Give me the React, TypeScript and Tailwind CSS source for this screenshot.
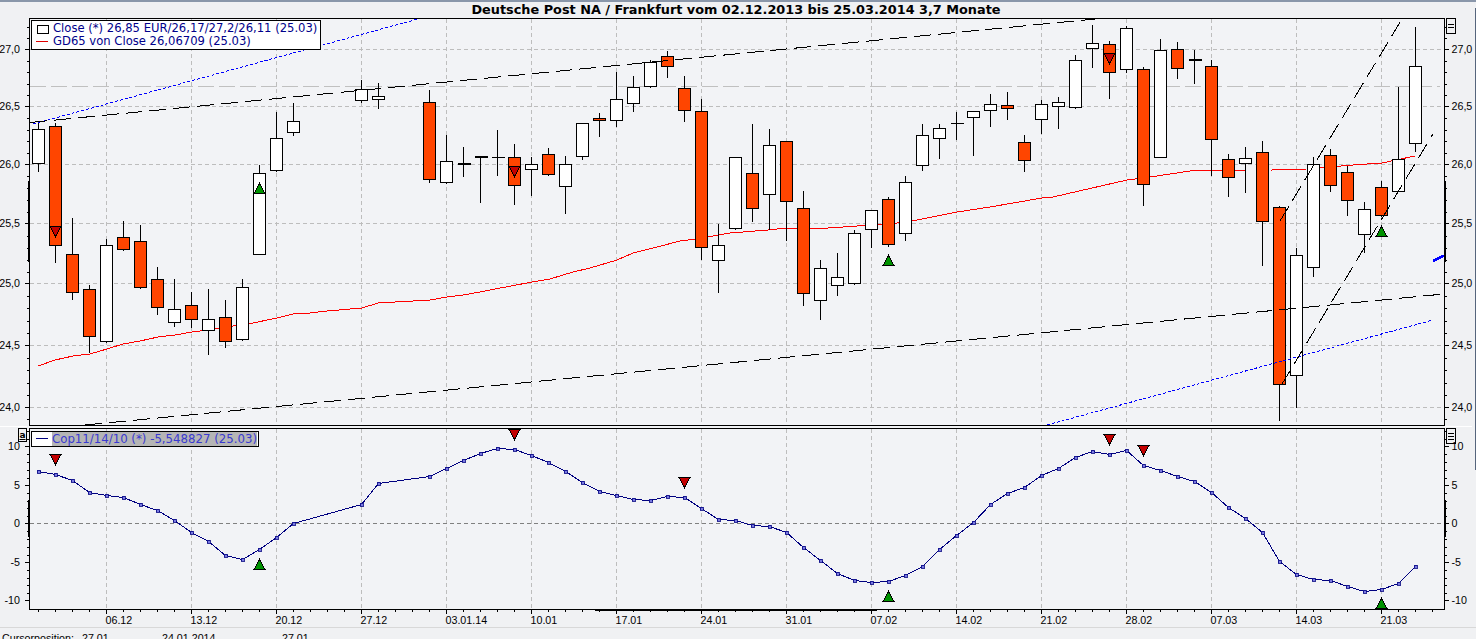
type Candle = [number, number, number, number, number, string];

// [index, wick top, body top, body bottom, wick bottom, kind]
// kind: o orange, w white, d thick doji, t thin doji
const candles: Candle[] = [
  [0, 123, 129, 163, 172, 'w'], [1, 123, 126, 245, 263, 'o'], [2, 218, 254, 292, 300, 'o'],
  [3, 285, 289, 336, 353, 'o'], [4, 239, 245, 341, 343, 'w'], [5, 221, 237, 249, 251, 'o'],
  [6, 225, 241, 287, 289, 'o'], [7, 267, 279, 307, 315, 'o'], [8, 279, 309, 322, 327, 'w'],
  [9, 292, 305, 319, 328, 'o'], [10, 289, 319, 330, 355, 'w'], [11, 300, 317, 341, 348, 'o'],
  [12, 279, 287, 339, 341, 'w'], [13, 165, 173, 254, 255, 'w'], [14, 112, 138, 170, 172, 'w'],
  [15, 103, 121, 132, 136, 'w'], [19, 80, 89, 100, 103, 'w'], [20, 83, 96, 99, 109, 'w'],
  [23, 90, 102, 179, 183, 'o'], [24, 135, 161, 182, 184, 'w'], [25, 147, 163, 163, 177, 'd'],
  [26, 157, 156, 156, 203, 'd'], [27, 130, 157, 157, 176, 't'], [28, 144, 157, 185, 205, 'o'],
  [29, 157, 164, 169, 196, 'w'], [30, 148, 154, 174, 176, 'o'], [31, 156, 164, 186, 214, 'w'],
  [32, 123, 123, 156, 160, 'w'], [33, 113, 118, 120, 137, 'o'], [34, 72, 99, 120, 127, 'w'],
  [35, 76, 87, 103, 112, 'w'], [36, 60, 62, 86, 88, 'w'], [37, 51, 56, 66, 78, 'o'],
  [38, 76, 88, 110, 122, 'o'], [39, 99, 111, 247, 260, 'o'], [40, 224, 245, 260, 293, 'w'],
  [41, 157, 157, 228, 230, 'w'], [42, 124, 173, 208, 222, 'o'], [43, 129, 145, 194, 230, 'w'],
  [44, 141, 141, 201, 241, 'o'], [45, 191, 208, 293, 306, 'o'], [46, 260, 268, 300, 320, 'w'],
  [47, 253, 277, 285, 296, 'w'], [48, 230, 233, 283, 285, 'w'], [49, 210, 210, 229, 248, 'w'],
  [50, 197, 199, 244, 247, 'o'], [51, 176, 182, 233, 241, 'w'], [52, 124, 135, 165, 171, 'w'],
  [53, 124, 128, 138, 159, 'w'], [54, 112, 123, 123, 140, 't'], [55, 111, 111, 117, 156, 'w'],
  [56, 94, 104, 110, 127, 'w'], [57, 92, 105, 108, 120, 'o'], [58, 135, 142, 160, 172, 'o'],
  [59, 100, 104, 119, 134, 'w'], [60, 97, 102, 106, 129, 'w'], [61, 55, 60, 107, 109, 'w'],
  [62, 25, 43, 48, 68, 'w'], [63, 41, 44, 72, 99, 'o'], [64, 26, 28, 69, 73, 'w'],
  [65, 67, 69, 184, 206, 'o'], [66, 39, 50, 157, 158, 'w'], [67, 42, 49, 68, 79, 'o'],
  [68, 50, 59, 59, 84, 'd'], [69, 60, 66, 139, 176, 'o'], [70, 154, 159, 177, 197, 'o'],
  [71, 147, 158, 163, 193, 'w'], [72, 141, 152, 221, 266, 'o'], [73, 206, 207, 384, 421, 'o'],
  [74, 248, 255, 375, 408, 'w'], [75, 157, 164, 267, 277, 'w'], [76, 149, 155, 185, 192, 'o'],
  [77, 166, 172, 200, 216, 'o'], [78, 202, 209, 234, 253, 'w'], [79, 181, 187, 215, 217, 'o'],
  [80, 87, 159, 191, 192, 'w'], [81, 27, 66, 143, 152, 'w'],
];

const redLine =
  '38,366 55,360 73,356 90,354 107,349 123,344 140,341 158,337 175,335 192,332 208,330 226,327 248,324 277,318 293,314 310,313 327,311 362,308 378,303 395,302 413,301 430,300 447,297 463,295 480,292 490,290 532,282 550,279 573,272 590,268 617,260 633,253 657,247 680,241 697,239 730,233 768,230 787,228 828,228 872,225 897,223 912,221 957,212 990,207 1042,198 1053,197 1127,180 1150,177 1190,171 1247,170 1272,170 1307,169 1353,165 1382,163 1415,156';

const copock: [number, number][] = [
  [0, 471], [1, 474], [2, 480], [3, 492], [4, 495], [5, 497], [6, 504], [7, 510], [8, 520], [9, 532],
  [10, 541], [11, 555], [12, 559], [13, 549], [14, 537], [15, 523], [19, 504], [20, 483], [23, 476],
  [24, 468], [25, 460], [26, 453], [27, 448], [28, 449], [29, 455], [30, 462], [31, 471], [32, 482],
  [33, 491], [34, 495], [35, 499], [36, 500], [37, 496], [38, 497], [39, 508], [40, 519], [41, 520],
  [42, 525], [43, 526], [44, 532], [45, 547], [46, 560], [47, 573], [48, 580], [49, 582], [50, 581],
  [51, 575], [52, 566], [53, 549], [54, 535], [55, 522], [56, 504], [57, 493], [58, 487], [59, 475],
  [60, 468], [61, 457], [62, 451], [63, 454], [64, 450], [65, 465], [66, 470], [67, 476], [68, 481],
  [69, 492], [70, 507], [71, 518], [72, 532], [73, 561], [74, 574], [75, 579], [76, 580], [77, 586],
  [78, 591], [79, 589], [80, 583], [81, 566],
];

const dates = ['06.12', '13.12', '20.12', '27.12', '03.01.14', '10.01', '17.01', '24.01', '31.01', '07.02', '14.02', '21.02', '28.02', '07.03', '14.03', '21.03'];
const priceTicks: [string, number][] = [['27,0', 49.5], ['26,5', 106.5], ['26,0', 164.5], ['25,5', 223.5], ['25,0', 283.5], ['24,5', 345.5], ['24,0', 407.5]];
const copTicks: [string, number][] = [['10', 446.5], ['5', 485.5], ['0', 523.5], ['-5', 562.5], ['-10', 600.5]];

const px = (i: number) => 38.5 + 17 * i;
const snap = (v: number) => Math.round(v) + 0.5;
const axisFont = { fontFamily: '"Liberation Sans", Arial, sans-serif', fontSize: 10.7 };

function minorTicks(ticks: [string, number][], parts: number, top: number, bottom: number) {
  const out: number[] = [];
  ticks.slice(1).forEach(([, y], n) => {
    const prev = ticks[n][1];
    for (let k = 1; k < parts; k++) out.push(snap(prev + ((y - prev) * k) / parts));
  });
  const step = (ticks[1][1] - ticks[0][1]) / parts;
  for (let y = ticks[0][1] - step; y > top; y -= step) out.push(snap(y));
  for (let y = ticks[ticks.length - 1][1] + step; y < bottom; y += step) out.push(snap(y));
  return out;
}

function Triangle({ x, top, tip, fill }: { x: number; top: number; tip: number; fill: string }) {
  return <polygon points={`${x - 5.5},${top} ${x + 5.5},${top} ${x},${tip}`} fill={fill} stroke="#000" strokeWidth={1} />;
}

function Axis({ ticks, minors, top, bottom, thickTop, thickBottom, leftAnchor }: {
  ticks: [string, number][]; minors: number[]; top: number; bottom: number; thickTop: number; thickBottom: number; leftAnchor: number;
}) {
  return (
    <g>
      <line x1={29.5} x2={29.5} y1={top} y2={bottom} stroke="#000" />
      <line x1={1444.5} x2={1444.5} y1={top} y2={bottom} stroke="#000" />
      <line x1={29} x2={29} y1={thickTop} y2={thickBottom} stroke="#000" strokeWidth={2} />
      <line x1={1445} x2={1445} y1={thickTop} y2={thickBottom} stroke="#000" strokeWidth={2} />
      {minors.map((y) => (
        <g key={y} stroke="#000">
          <line x1={27} x2={29} y1={y} y2={y} />
          <line x1={1445} x2={1447} y1={y} y2={y} />
        </g>
      ))}
      {ticks.map(([label, y]) => (
        <g key={label}>
          <line x1={25} x2={29} y1={y} y2={y} stroke="#000" />
          <line x1={1445} x2={1449} y1={y} y2={y} stroke="#000" />
          <text x={leftAnchor} y={y + 3.5} textAnchor="end" fill="#000" style={axisFont}>{label}</text>
          <text x={1451.5} y={y + 3.5} fill="#000" style={axisFont}>{label}</text>
        </g>
      ))}
    </g>
  );
}

function PriceChart() {
  return (
    <svg className="block" width={1476} height={408} viewBox="0 18 1476 408" shapeRendering="crispEdges">
      <rect x={30} y={18} width={1414} height={407} fill="#f2f3f6" />
      {dates.map((_, n) => (
        <line key={n} x1={106.5 + 85 * n} x2={106.5 + 85 * n} y1={19} y2={425} stroke="#bdbdbd" strokeDasharray="4 3" />
      ))}
      {priceTicks.map(([label, y]) => (
        <line key={label} x1={30} x2={1444} y1={y} y2={y} stroke="#bdbdbd" strokeDasharray="4 3" />
      ))}
      <line x1={30} x2={1440} y1={86.5} y2={86.5} stroke="#c0c0c0" strokeDasharray="16 5" />
      <polyline points={redLine} fill="none" stroke="#ff0000" />
      {candles.map(([i, wt, top, bottom, wb, kind]) => {
        const x = px(i);
        return (
          <g key={i}>
            <line x1={x} x2={x} y1={wt} y2={wb} stroke="#000" />
            {kind === 'd' && <rect x={x - 6} y={top} width={13} height={2} fill="#000" />}
            {kind === 't' && <line x1={x - 6} x2={x + 7} y1={top + 0.5} y2={top + 0.5} stroke="#000" />}
            {(kind === 'o' || kind === 'w') && (
              <rect x={x - 6} y={top + 0.5} width={12} height={bottom - top} fill={kind === 'o' ? '#ff4500' : '#fff'} stroke="#000" />
            )}
          </g>
        );
      })}
      <Triangle x={55.5} top={226.5} tip={236.5} fill="#c40000" />
      <Triangle x={514.5} top={166.5} tip={176.5} fill="#c40000" />
      <Triangle x={1109.5} top={53.5} tip={63.5} fill="#c40000" />
      <Triangle x={259.5} top={193.5} tip={183.5} fill="#009300" />
      <Triangle x={888.5} top={265.5} tip={255.5} fill="#009300" />
      <Triangle x={1381.5} top={236.5} tip={226.5} fill="#009300" />
      <line x1={33} y1={124} x2={418} y2={19} stroke="#0000ff" strokeDasharray="3 2" />
      <line x1={1047} y1={425} x2={1433} y2={320} stroke="#0000ff" strokeDasharray="3 2" />
      <line x1={1433} y1={261} x2={1444} y2={255.5} stroke="#0000ff" strokeWidth={2.5} />
      <line x1={30} y1={122.5} x2={1095} y2={19} stroke="#000" strokeDasharray="17 7" />
      <line x1={85} y1={425} x2={1444} y2={294} stroke="#000" strokeDasharray="17 7" />
      <line x1={1280} y1={221} x2={1402} y2={19} stroke="#000" strokeDasharray="17 7" />
      <line x1={1282} y1={384} x2={1433} y2={134} stroke="#000" strokeDasharray="17 7" />
      <line x1={29} x2={1445} y1={18.5} y2={18.5} stroke="#000" />
      <line x1={29} x2={1445} y1={425.5} y2={425.5} stroke="#000" />
      <Axis ticks={priceTicks} minors={minorTicks(priceTicks, 5, 20, 424)} top={18} bottom={426} thickTop={181} thickBottom={262} leftAnchor={20} />
    </svg>
  );
}

function CopockChart() {
  const points = copock.map(([i, y]) => `${px(i)},${y + 0.5}`).join(' ');
  const ticks: number[] = [];
  for (let i = 0; i <= 82; i++) ticks.push(px(i));
  return (
    <svg className="block" width={1476} height={199} viewBox="0 428 1476 199" shapeRendering="crispEdges">
      <rect x={30} y={428} width={1414} height={181} fill="#f2f3f6" />
      {dates.map((d, n) => (
        <line key={d} x1={106.5 + 85 * n} x2={106.5 + 85 * n} y1={429} y2={609} stroke="#bdbdbd" strokeDasharray="4 3" />
      ))}
      <line x1={30} x2={1444} y1={523.5} y2={523.5} stroke="#808080" strokeDasharray="4 3" />
      <polyline points={points} fill="none" stroke="#000080" />
      {copock.map(([i, y]) => (
        <rect key={i} x={px(i) - 1.5} y={y - 1} width={3} height={3} fill="#7a7ae0" stroke="#000080" strokeWidth={0.8} />
      ))}
      <Triangle x={55.5} top={454.5} tip={464.5} fill="#c40000" />
      <Triangle x={514.5} top={429.5} tip={439.5} fill="#c40000" />
      <Triangle x={684.5} top={477.5} tip={487.5} fill="#c40000" />
      <Triangle x={1109.5} top={434.5} tip={444.5} fill="#c40000" />
      <Triangle x={1143.5} top={445.5} tip={455.5} fill="#c40000" />
      <Triangle x={259.5} top={569.5} tip={559.5} fill="#009300" />
      <Triangle x={888.5} top={601.5} tip={591.5} fill="#009300" />
      <Triangle x={1381.5} top={608.5} tip={598.5} fill="#009300" />
      <line x1={29} x2={1445} y1={428.5} y2={428.5} stroke="#000" />
      <line x1={29} x2={1445} y1={609.5} y2={609.5} stroke="#000" />
      <rect x={595} y={609} width={282} height={2} fill="#000" />
      {ticks.map((x) => (
        <line key={x} x1={x} x2={x} y1={610} y2={(x - 21.5) % 85 === 0 ? 614 : 612} stroke="#000" />
      ))}
      {dates.map((d, n) => (
        <text key={d} x={105.5 + 85 * n} y={624} fill="#000" style={axisFont}>{d}</text>
      ))}
      <Axis ticks={copTicks} minors={minorTicks(copTicks, 5, 430, 608)} top={428} bottom={610} thickTop={500} thickBottom={537} leftAnchor={20} />
    </svg>
  );
}

function CornerButton({ lines, className }: { lines: number; className: string }) {
  return (
    <div className={`absolute w-[10px] h-[16px] border border-black flex flex-col items-center justify-center gap-[2px] ${className}`}>
      {Array.from({ length: lines }).map((_, n) => (
        <div key={n} className="w-[6px] h-px bg-black" />
      ))}
    </div>
  );
}

export default function App() {
  return (
    <div className="relative w-[1476px] h-[639px] overflow-hidden bg-[#f0f1f3] flex flex-col font-['DejaVu_Sans',sans-serif]">
      <div className="h-[2px] shrink-0 bg-[#8a97aa]" />
      <div className="h-[16px] shrink-0 flex items-center justify-center pr-[4px] text-[12.85px] leading-none font-bold text-black whitespace-nowrap">
        Deutsche Post NA / Frankfurt vom 02.12.2013 bis 25.03.2014 3,7 Monate
      </div>

      <div className="relative shrink-0 h-[408px]">
        <PriceChart />
        <div className="absolute left-[31px] top-[2px] w-[290px] h-[30px] bg-white border border-black pl-[21px] flex flex-col justify-center text-[11.6px] leading-[13px] text-[#00008b] whitespace-nowrap">
          <div>Close (*) 26,85 EUR/26,17/27,2/26,11 (25.03)</div>
          <div>GD65 von Close 26,06709 (25.03)</div>
          <div className="absolute left-[5px] top-[4px] w-[12px] h-[9px] border border-black bg-white" />
          <div className="absolute left-[4px] top-[20px] w-[12px] h-px bg-[#e00000]" />
        </div>
        <CornerButton lines={2} className="left-[1446px] top-0" />
      </div>

      <div className="h-[2px] shrink-0 flex justify-between pr-[4px]">
        <div className="w-[27px] h-px bg-white" />
        <div className="w-[28px] h-px bg-white" />
      </div>

      <div className="relative shrink-0 h-[199px]">
        <CopockChart />
        <div className="absolute left-[31px] top-[3px] w-[228px] h-[16px] bg-white border border-black pl-[20px] flex items-center">
          <span className="bg-[#b5b5b5] text-[#3a3ad0] text-[11.75px] leading-[14px] whitespace-nowrap">Cop11/14/10 (*) -5,548827 (25.03)</span>
          <div className="absolute left-[4px] top-[6px] w-[12px] h-px bg-[#000080]" />
        </div>
        <div className="absolute left-[18px] top-0 w-[9px] h-[14px] border border-black flex items-center justify-center text-[9px] font-bold leading-none underline">a</div>
        <CornerButton lines={3} className="left-[1446px] top-0" />
      </div>

      <div className="relative flex-1 min-h-0 overflow-hidden border-t border-[#d8d8d8] font-['Liberation_Sans',sans-serif] text-[10.7px] leading-none text-black">
        <div className="flex pl-[2px] pt-[5px] whitespace-nowrap">
          <span className="w-[80px]">Cursorposition:</span>
          <span className="w-[80px]">27.01</span>
          <span className="w-[120px]">24.01.2014</span>
          <span>27.01</span>
        </div>
      </div>
      <div className="absolute right-0 top-[8px] w-px h-[462px] bg-[#56657c]" />
    </div>
  );
}
